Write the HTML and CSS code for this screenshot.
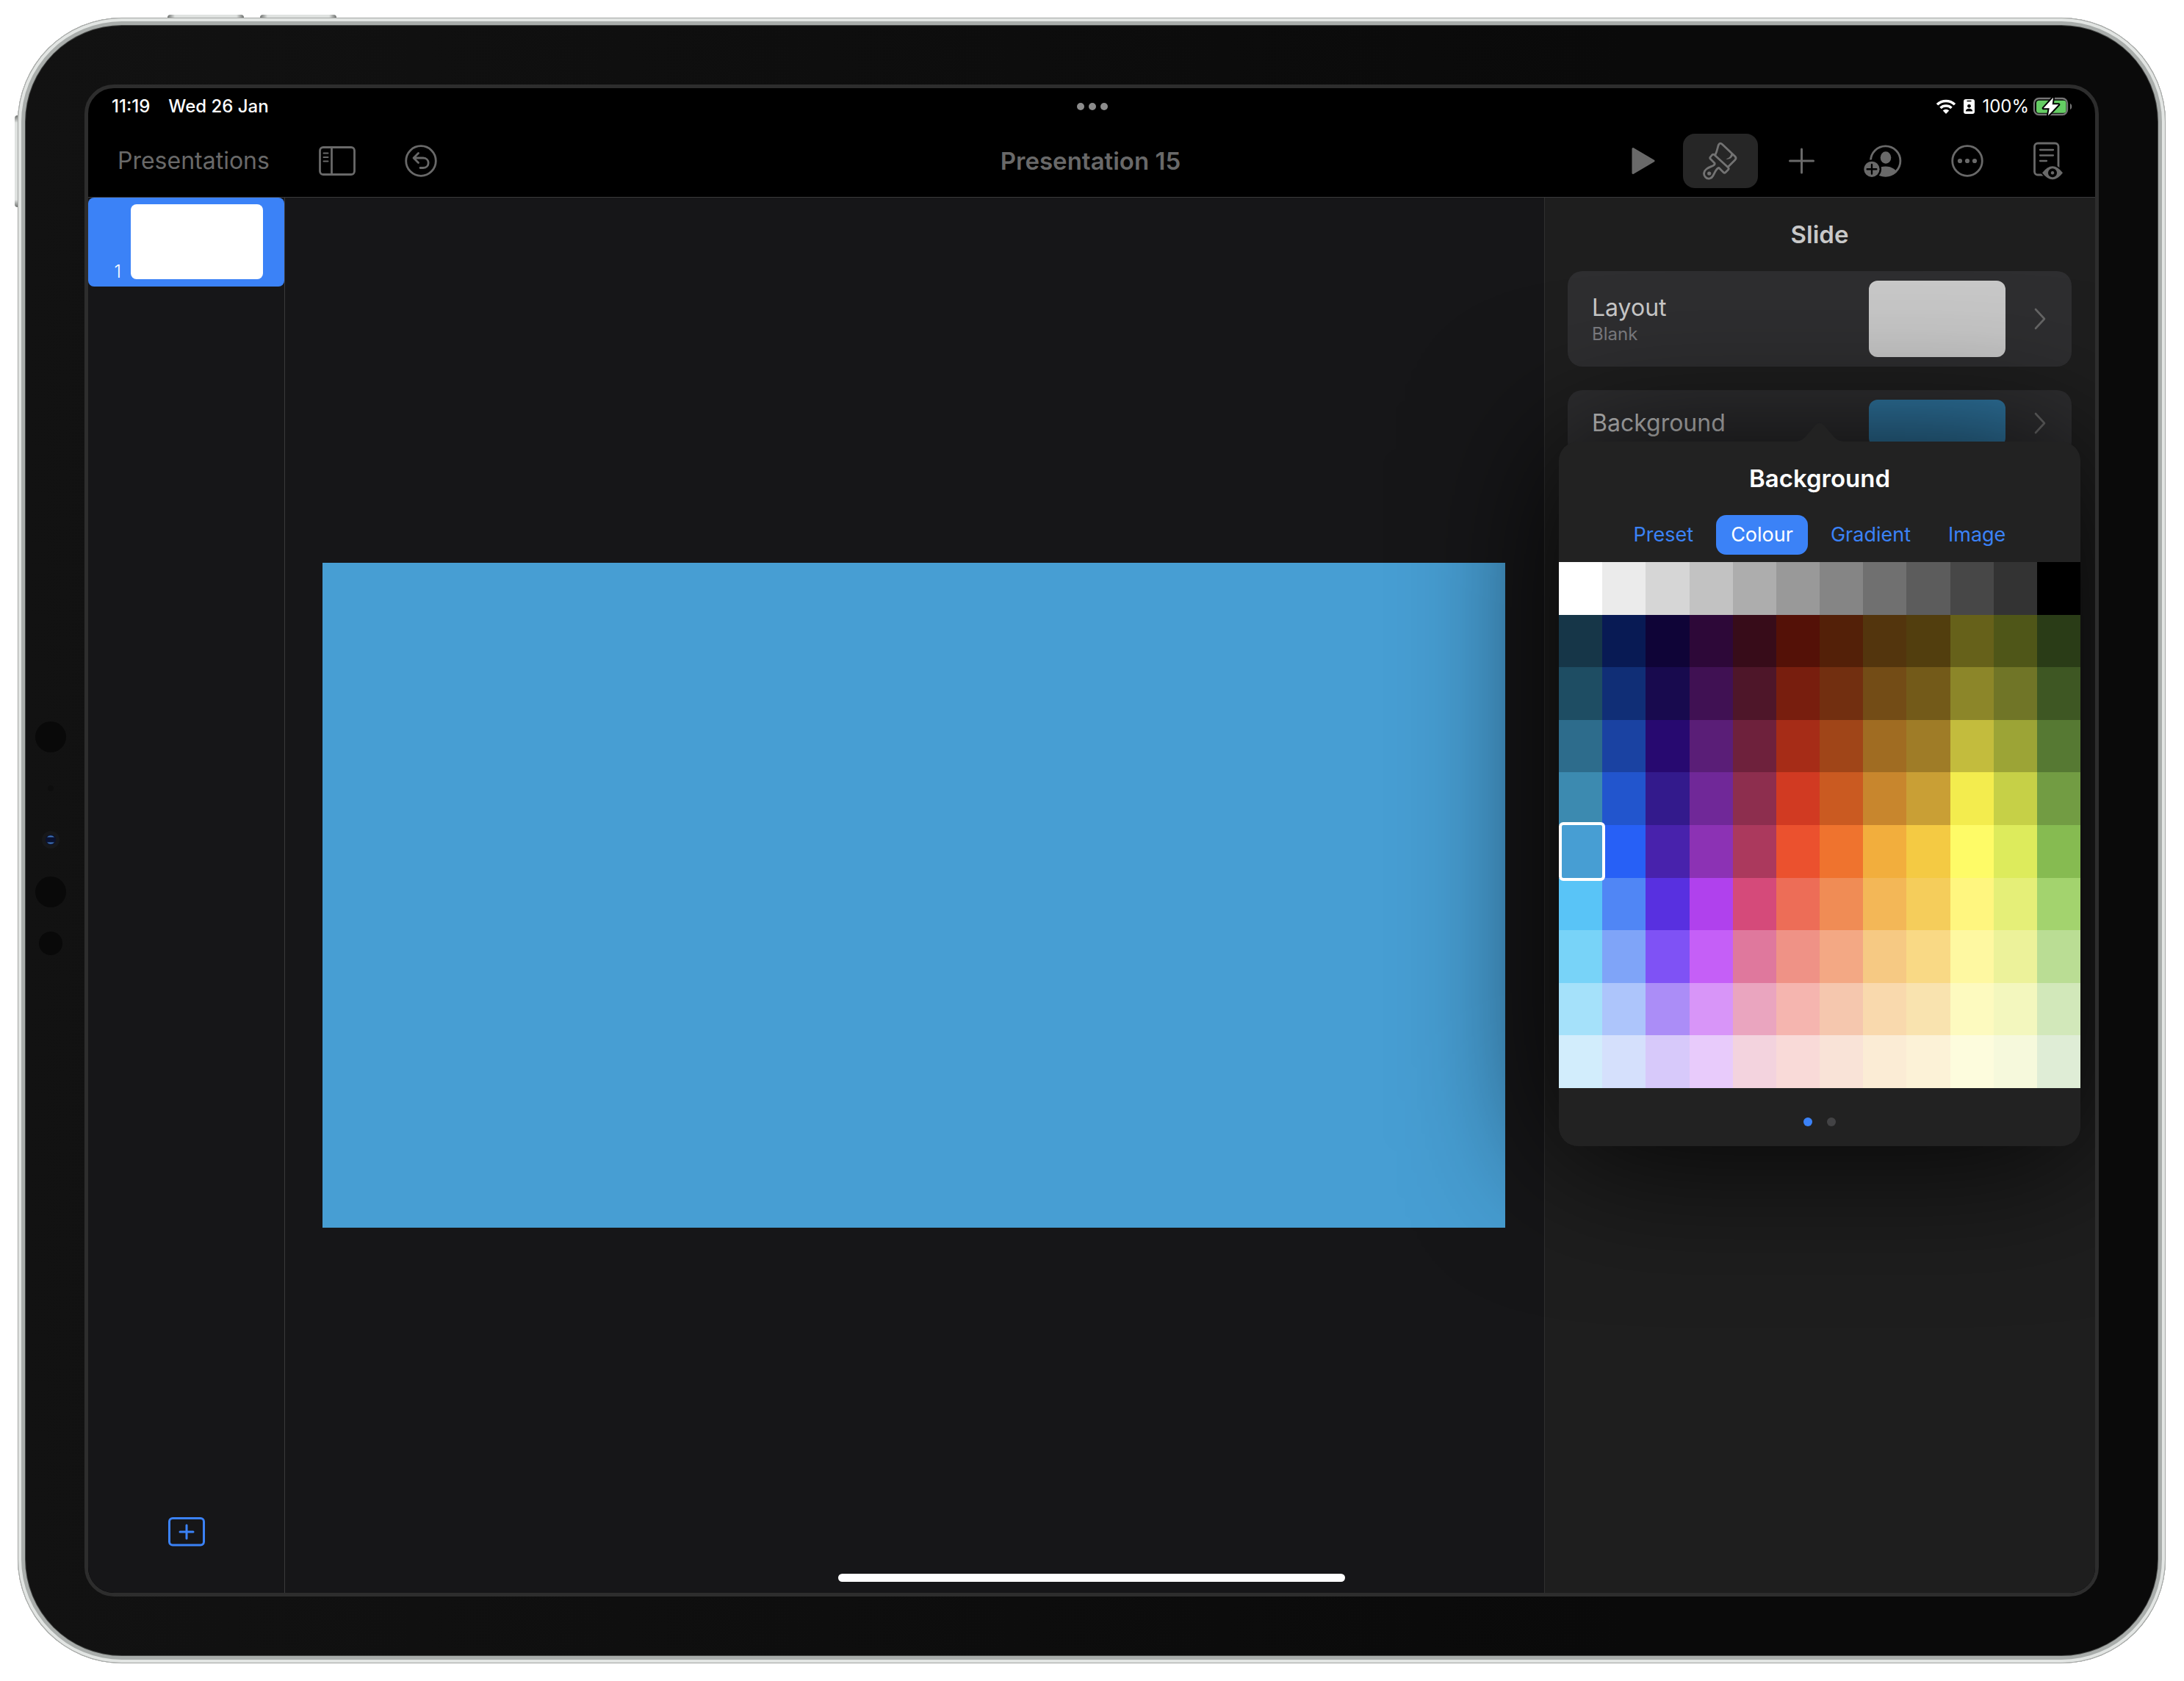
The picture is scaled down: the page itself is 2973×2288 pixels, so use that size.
FILE: index.html
```html
<!DOCTYPE html>
<html lang="en-GB">
<head>
<meta charset="utf-8">
<title>Presentation 15</title>
<link rel="stylesheet" href="styles.css">
</head>
<body>
<div class="device">
  <span class="hw-button hw-vol-a"></span>
  <span class="hw-button hw-vol-b"></span>
  <span class="hw-button hw-power"></span>
  <div class="bezel">
    <svg class="sensors" width="44" height="330" viewBox="0 0 44 330" aria-hidden="true">
      <circle cx="22" cy="24" r="21" fill="#090909"/>
      <circle cx="22" cy="94" r="4" fill="#0e0e0e"/>
      <circle cx="22" cy="164" r="12" fill="#17181a"/>
      <circle cx="22" cy="164" r="7" fill="#0a1230"/>
      <path d="M17 160.500a6.500 6.500 0 0 1 10 0zM17 167.500a6.500 6.500 0 0 0 10 0z" fill="#3f72b8"/>
      <circle cx="22" cy="235" r="21" fill="#090909"/>
      <circle cx="22" cy="305" r="16" fill="#090909"/>
    </svg>
    <div class="screen">
      <header class="status">
        <div class="status-left"><span>11:19</span><span>Wed 26 Jan</span></div>
        <button class="multitask" aria-label="Multitasking"><i></i><i></i><i></i></button>
        <div class="status-right">
          <svg width="28" height="20" viewBox="0 0 28 20" aria-hidden="true">
            <path d="M2 7.300a17.300 17.300 0 0 1 24 0M6.500 12a11 11 0 0 1 15 0" fill="none" stroke="#fff" stroke-width="3.600"/>
            <path d="M14 20l-4.300-4.400a6.200 6.200 0 0 1 8.600 0z" fill="#fff"/>
          </svg>
          <svg width="15" height="20" viewBox="0 0 15 20" aria-hidden="true">
            <rect width="15" height="20" rx="3" fill="#fff"/>
            <path d="M4.500 2.500h6" stroke="#000" stroke-width="1.400"/>
            <circle cx="7.500" cy="9.300" r="2.400" fill="#000"/>
            <path d="M2.800 16.500c0-5 9.400-5 9.400 0z" fill="#000"/>
          </svg>
          <span>100%</span>
          <svg class="battery" width="54" height="26" viewBox="0 0 54 26" aria-hidden="true">
            <rect x="2" y="2" width="45" height="22" rx="6.500" fill="none" stroke="#757575" stroke-width="2.300"/>
            <rect x="5" y="4.700" width="40.500" height="17" rx="3.500" fill="#65cd64"/>
            <path d="M51 9c3 1 3 7 0 8z" fill="#757575"/>
            <path d="M28 .7L14.700 15.300h8L21 25.300 35.300 10.300h-8.600z" fill="#fff" stroke="#000" stroke-width="4" stroke-linejoin="round" paint-order="stroke"/>
          </svg>
        </div>
      </header>

      <nav class="toolbar">
        <div class="tools-left">
          <button class="back">Presentations</button>
          <button aria-label="View options">
            <svg width="50" height="40" viewBox="0 0 50 40" fill="none" stroke="#696969" stroke-width="2.800">
              <rect x="1.500" y="1.500" width="47" height="37" rx="4.500"/>
              <path d="M17.500 2v36"/><path d="M6.500 9.500h6M6.500 15h6M6.500 20.500h6" stroke-width="2" stroke-linecap="round"/>
            </svg>
          </button>
          <button aria-label="Undo">
            <svg width="44" height="44" viewBox="0 0 44 44" fill="none" stroke="#696969" stroke-width="2.800" stroke-linecap="round" stroke-linejoin="round">
              <circle cx="22" cy="22" r="20.300"/>
              <path d="M18.500 11.500L12 18l6.500 6.500M12.500 18h12.500c9.500 0 9.500 13.500 0 13.500h-4"/>
            </svg>
          </button>
        </div>
        <h1>Presentation 15</h1>
        <div class="tools-right">
          <div class="tools-a">
            <button aria-label="Play">
              <svg width="32" height="38" viewBox="0 0 32 38"><path d="M2 2.500L30 19 2 35.500z" fill="#696969" stroke="#696969" stroke-width="3" stroke-linejoin="round"/></svg>
            </button>
            <button class="active" aria-label="Format" aria-pressed="true">
              <svg width="48" height="52" viewBox="0 0 48 52" fill="none" stroke="#737373" stroke-width="2.800" stroke-linecap="round" stroke-linejoin="round">
                <path d="M17 17.500C20 12 20 7 21.500 4Q23.500.5 26.500 3.500L44 20Q46 22 44 24.500L34.500 34"/>
                <path d="M15.500 17.500L34 34.500Q36 36.500 34.500 38L31 41.500Q29.500 43 28 41.500L22 35.500C18 36 17 41 14 46C12 50 7 52 3.500 48C.5 45 1 40 5 37C10 33 17.500 33 16 29L10.500 23.500Q9 22 10.500 20.500L12.500 18Q14 16.500 15.500 17.500z"/>
                <path d="M38.500 14.500C38.500 19 36 22 31.500 23.500C36 24.500 39.500 22 41.500 18z" fill="#737373" stroke="none"/>
                <circle cx="8.700" cy="43" r="2.600" fill="#737373" stroke="none"/>
              </svg>
            </button>
          </div>
          <div class="tools-b">
            <button aria-label="Insert">
              <svg width="35" height="36" viewBox="0 0 35 36"><path d="M17.500 2v32M1.500 18h32" stroke="#696969" stroke-width="3" stroke-linecap="round"/></svg>
            </button>
            <button aria-label="Collaborate">
              <svg width="52" height="46" viewBox="0 0 52 46">
                <defs><clipPath id="ring"><circle cx="29.700" cy="23" r="21.500"/></clipPath></defs>
                <circle cx="29.700" cy="23" r="20.200" fill="none" stroke="#696969" stroke-width="2.800"/>
                <ellipse cx="30" cy="18.500" rx="7.300" ry="8.300" fill="#696969"/>
                <ellipse cx="29.700" cy="42" rx="16" ry="11.500" fill="#696969" clip-path="url(#ring)"/>
                <circle cx="11" cy="34.300" r="13" fill="#000"/>
                <circle cx="11" cy="34.300" r="10.600" fill="#696969"/>
                <path d="M11 28v12.600M4.700 34.300h12.600" stroke="#000" stroke-width="2.400" stroke-linecap="round"/>
              </svg>
            </button>
            <button aria-label="More">
              <svg width="44" height="44" viewBox="0 0 44 44">
                <circle cx="22" cy="22" r="20.300" fill="none" stroke="#696969" stroke-width="2.800"/>
                <g fill="#696969"><circle cx="12" cy="22" r="3.100"/><circle cx="22" cy="22" r="3.100"/><circle cx="32" cy="22" r="3.100"/></g>
              </svg>
            </button>
            <button aria-label="Reading view">
              <svg width="42" height="52" viewBox="0 0 42 52">
                <g fill="none" stroke="#696969" stroke-width="2.800" stroke-linecap="round">
                  <rect x="2.500" y="2" width="32.500" height="43" rx="4.500"/>
                  <path d="M10 11h18M10 18.500h18M10 26h9" stroke-width="2.300"/>
                </g>
                <path d="M13 42.300Q27 24.300 41 42.300Q27 60.300 13 42.300z" fill="#696969" stroke="#000" stroke-width="3.500" paint-order="stroke"/>
                <circle cx="27" cy="42.300" r="6" fill="#000"/><circle cx="27" cy="42.300" r="2.200" fill="#696969"/>
              </svg>
            </button>
          </div>
        </div>
      </nav>

      <main class="workspace">
        <aside class="navigator">
          <button class="slide-cell" aria-label="Slide 1"><span>1</span><i class="thumb"></i></button>
          <button class="add-slide" aria-label="Add slide">
            <svg width="50" height="40" viewBox="0 0 50 40" fill="none" stroke="#3b82f7" stroke-width="3" stroke-linecap="round">
              <rect x="1.500" y="1.500" width="47" height="36.500" rx="4.500"/><path d="M25 11v18M16 20h18"/>
            </svg>
          </button>
        </aside>

        <section class="canvas" aria-label="Slide canvas"><div class="slide"></div></section>

        <aside class="inspector">
          <h2>Slide</h2>
          <button class="card card-layout">
            <span class="card-text">Layout<small>Blank</small></span>
            <i class="swatch-preview"></i>
            <svg width="16" height="30" viewBox="0 0 16 30"><path d="M2 2l12 13L2 28" fill="none" stroke="#666" stroke-width="2.600" stroke-linecap="round" stroke-linejoin="round"/></svg>
          </button>
          <button class="card card-background">
            <span class="card-text">Background</span>
            <i class="swatch-preview blue"></i>
            <svg width="16" height="30" viewBox="0 0 16 30"><path d="M2 2l12 13L2 28" fill="none" stroke="#666" stroke-width="2.600" stroke-linecap="round" stroke-linejoin="round"/></svg>
          </button>

          <div class="popover" role="dialog" aria-labelledby="pop-title">
            <svg class="arrow" width="74" height="27" viewBox="0 0 74 27" aria-hidden="true"><path d="M0 26C10 26 14 24 19 18L31 4Q37-3 43 4L55 18C60 24 64 26 74 26V27H0z" fill="#222"/></svg>
            <h2 id="pop-title">Background</h2>
            <div class="tabs" role="tablist">
              <button role="tab">Preset</button>
              <button role="tab" class="selected" aria-selected="true">Colour</button>
              <button role="tab">Gradient</button>
              <button role="tab">Image</button>
            </div>
            <div class="palette" id="palette" role="radiogroup" aria-label="Colour"></div>
            <div class="pages"><i class="on"></i><i></i></div>
          </div>
        </aside>
      </main>
      <div class="home"></div>
    </div>
  </div>
</div>
<script src="palette.js"></script>
</body>
</html>
```
FILE: palette.js
```js
const rows = [
  "ffffff ebebeb d6d6d6 c2c2c2 adadad 999999 858585 707070 5c5c5c 474747 333333 000000",
  "163648 081a54 0f0437 2d0838 370c19 541107 532008 53350d 523e0e 66611a 4f5618 2a3c17",
  "1e4d63 102e76 180a4e 401153 4e1629 781e0e 722f10 734c16 735a19 8c8629 707527 3e5723",
  "2d6c8c 1a42a2 270970 5a1e77 6e213c a62c17 a04518 a06c22 9f7c27 c3bc3d 9ca436 567933",
  "3c8ab0 2255cd 331a8c 702898 8d2e4e d13a22 ca5a21 c8862d c99f35 f3ec4e c6d047 729c43",
  "479ed3 2760f6 4822ac 8c32b4 ab395d eb512e ef732e f2ae3d f4ca43 fefb67 ddeb5c 86bb51",
  "59c4f7 5086f5 5830e0 b041ed d54a7a ed6d57 f08c55 f3b757 f5cd5b fff67f e5ef78 a3d36e",
  "78d3f8 7fa4f8 7f52f5 c55ff7 df789d ef9286 f3a884 f6c983 f9d985 fef8a1 ecf29a badd94",
  "a5e1fa adc5fb ab8df7 d895f8 eaa5bf f5b5af f5c7ae f9d9ad f9e3af fdfabf f3f7be d2e8ba",
  "d2edfc d5e0fc d7c9fa e8cbfb f3d3de f9dad8 f9e3d7 fbecd5 fcf2d7 fdfcdd f6f9dc dfedd6"
];

const palette = document.getElementById("palette");
for (const hex of rows.join(" ").split(" ")) {
  const label = document.createElement("label");
  label.className = "swatch";
  label.style.background = "#" + hex;
  const input = document.createElement("input");
  input.type = "radio";
  input.name = "colour";
  input.setAttribute("aria-label", "#" + hex);
  input.checked = hex === "479ed3";
  label.append(input);
  palette.append(label);
}
```
FILE: styles.css
```css
* { box-sizing: border-box; }

body {
  margin: 0;
  min-height: 100vh;
  padding: 24px 25px 24px 24px;
  display: flex;
  background: #fff;
  font-family: Inter, "Liberation Sans", sans-serif;
  color: #c8c8c8;
}

button {
  margin: 0;
  padding: 0;
  border: 0;
  background: none;
  font: inherit;
  color: inherit;
  text-align: left;
}

svg { display: block; flex: none; }
h1, h2 { margin: 0; font-size: 33px; line-height: 40px; font-weight: 600; text-align: center; }

/* Device body */
.device {
  position: relative;
  flex: 1;
  display: flex;
  padding: 11px;
  border-radius: 142px;
  background: #444644;
  box-shadow:
    inset 0 0 0 1px #a3a5a3,
    inset 0 0 0 5px #e2e5e3,
    inset 0 0 0 10px #a9adab;
}
.bezel {
  position: relative;
  flex: 1;
  display: flex;
  padding: 80px;
  border-radius: 131px;
  background: linear-gradient(90deg, #121212, #0a0a0a 75%);
}
.sensors { position: absolute; left: 12px; top: 50%; transform: translateY(-50%); }

.hw-button {
  position: absolute;
  z-index: -1;
  border-radius: 4px;
  background: linear-gradient(90deg, #6c6f6d, #dfe2e0 10px, #dfe2e0 calc(100% - 10px), #6c6f6d);
}
.hw-vol-a, .hw-vol-b { top: -4px; width: 104px; height: 10px; }
.hw-vol-a { left: 204px; }
.hw-vol-b { left: 330px; }
.hw-power {
  left: -4px;
  top: 133px;
  width: 10px;
  height: 125px;
  background: linear-gradient(#6c6f6d, #dfe2e0 10px, #dfe2e0 calc(100% - 10px), #6c6f6d);
}

.screen {
  position: relative;
  flex: 1;
  display: flex;
  flex-direction: column;
  overflow: hidden;
  border: 5px solid #2d2d2d;
  border-radius: 40px;
  background: #000;
}

/* Status bar */
.status {
  height: 49px;
  padding: 0 31px 0 32px;
  display: grid;
  grid-template-columns: 1fr auto 1fr;
  align-items: center;
  font-size: 24px;
  line-height: 32px;
  font-weight: 500;
  color: #fff;
}
.status-left { display: flex; gap: 25px; }
.status-right { display: flex; justify-content: flex-end; align-items: center; gap: 10px; font-weight: 400; }
.status-right .battery { margin-left: -5px; }
.multitask { display: flex; gap: 6px; }
.multitask i { width: 10px; height: 10px; border-radius: 50%; background: #8c8c8c; }

/* Toolbar */
.toolbar {
  height: 100px;
  padding: 0 43px 0 40px;
  display: grid;
  grid-template-columns: 1fr auto 1fr;
  align-items: center;
  border-bottom: 1px solid #3a3a3b;
  font-size: 32px;
  line-height: 40px;
  color: #696969;
}
.tools-left { display: flex; align-items: center; gap: 67px; }
.tools-right { display: flex; justify-content: flex-end; align-items: center; gap: 42px; }
.tools-a { display: flex; align-items: center; gap: 38px; }
.tools-b { display: flex; align-items: center; gap: 67px; }
.active {
  width: 102px;
  height: 74px;
  display: grid;
  place-items: center;
  border-radius: 16px;
  background: #262626;
}

/* Workspace */
.workspace {
  flex: 1;
  display: grid;
  grid-template-columns: 268px 1fr 750px;
  background: #161618;
}
.navigator {
  display: flex;
  flex-direction: column;
  justify-content: space-between;
  align-items: center;
  padding-bottom: 63px;
  border-right: 1px solid #3a3a3b;
}
.slide-cell {
  align-self: stretch;
  height: 121px;
  padding: 9px 29px 10px 0;
  display: flex;
  justify-content: flex-end;
  align-items: flex-end;
  gap: 13px;
  border-radius: 8px;
  background: #3b82f7;
  font-size: 24px;
  line-height: 20px;
  font-weight: 300;
  color: #fff;
}
.thumb { width: 180px; height: 102px; border-radius: 8px; background: #fff; }

.canvas { display: flex; align-items: center; padding: 0 53px 0 51px; }
.slide { flex: 1; aspect-ratio: 16 / 9; background: #479ed3; }

.inspector {
  position: relative;
  display: flex;
  flex-direction: column;
  padding: 0 32px 0 31px;
  border-left: 1px solid #303030;
  background: #1e1e1e;
}
.inspector h2 { line-height: 100px; }
.card {
  display: flex;
  align-items: center;
  padding: 13px 35px 13px 33px;
  border-radius: 20px;
  background: #2e2e30;
  font-size: 32px;
  line-height: 40px;
}
.card + .card { margin-top: 32px; }
.card-text { flex: 1; }
.card-layout .card-text { padding-top: 2px; }
.card small { display: block; font-size: 24px; line-height: 32px; color: #7c7c80; }
.swatch-preview { width: 186px; height: 104px; margin-right: 39px; border-radius: 12px; background: #c8c8c8; }
.swatch-preview.blue { height: 64px; background: #3078a4; }

/* Colour popover */
.popover {
  position: absolute;
  top: 332px;
  left: 19px;
  right: 20px;
  border-radius: 26px;
  background: #222;
  box-shadow: 0 8px 200px rgba(0, 0, 0, .9);
}
.arrow { position: absolute; left: 50%; top: -26px; margin-left: -37px; }
.popover h2 { color: #fff; }
.tabs {
  display: flex;
  justify-content: center;
  gap: 11px;
  margin-bottom: 10px;
  font-size: 27px;
  line-height: 54px;
  color: #3b82f7;
}
.tabs button { padding: 0 20px; border-radius: 14px; }
.tabs .selected { background: #3b82f7; color: #fff; }
.palette {
  height: 716px;
  display: grid;
  grid-template-columns: repeat(12, 1fr);
  grid-template-rows: repeat(10, 1fr);
}
.swatch input { position: absolute; opacity: 0; margin: 0; pointer-events: none; }
.swatch:has(:checked) {
  position: relative;
  margin: -4px -4px -4px 0;
  border: 4px solid #fff;
  border-radius: 6px;
}
.pages { display: flex; justify-content: center; gap: 20px; height: 79px; padding-top: 40px; }
.pages i { width: 12px; height: 12px; border-radius: 50%; background: #434345; }
.pages .on { background: #3b82f7; }

.home {
  position: absolute;
  left: 50%;
  bottom: 15px;
  width: 690px;
  height: 11px;
  margin-left: -345px;
  border-radius: 6px;
  background: #fff;
}
```
